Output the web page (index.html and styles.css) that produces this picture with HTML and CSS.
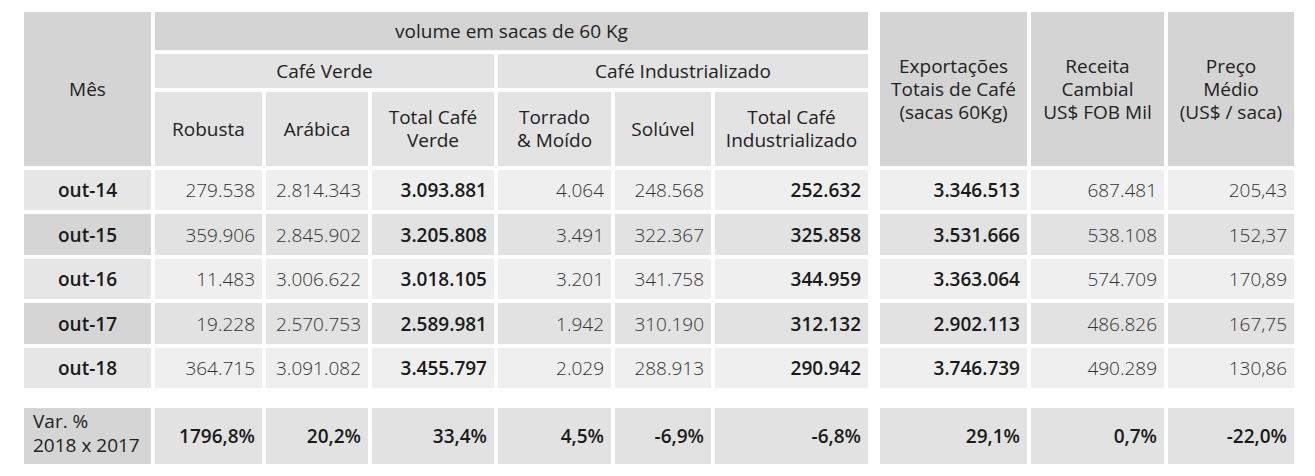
FILE: index.html
```html
<!DOCTYPE html>
<html lang="pt">
<head>
<meta charset="utf-8">
<link rel="stylesheet" href="styles.css">
</head>
<body>
<div class="sheet">
  <div class="h dark mes">Mês</div>
  <div class="h dark volume">volume em sacas de 60 Kg</div>
  <div class="h light verde">Café Verde</div>
  <div class="h light ind">Café Industrializado</div>
  <div class="h light sub s2">Robusta</div>
  <div class="h light sub s3">Arábica</div>
  <div class="h light sub s4">Total Café<br>Verde</div>
  <div class="h light sub s5">Torrado<br>&amp; Moído</div>
  <div class="h light sub s6">Solúvel</div>
  <div class="h light sub s7">Total Café<br>Industrializado</div>
  <div class="head-sep"></div>
  <div class="h dark exp">Exportações<br>Totais de Café<br>(sacas 60Kg)</div>
  <div class="h dark rec">Receita<br>Cambial<br>US$ FOB Mil</div>
  <div class="h dark pre">Preço<br>Médio<br>(US$ / saca)</div>

  <div class="c m odd first">out-14</div>
  <div class="c odd">279.538</div><div class="c odd">2.814.343</div><div class="c odd b">3.093.881</div>
  <div class="c odd">4.064</div><div class="c odd">248.568</div><div class="c odd b">252.632</div>
  <div class="sep"></div>
  <div class="c odd b">3.346.513</div><div class="c odd">687.481</div><div class="c odd">205,43</div>

  <div class="c m even">out-15</div>
  <div class="c even">359.906</div><div class="c even">2.845.902</div><div class="c even b">3.205.808</div>
  <div class="c even">3.491</div><div class="c even">322.367</div><div class="c even b">325.858</div>
  <div class="sep"></div>
  <div class="c even b">3.531.666</div><div class="c even">538.108</div><div class="c even">152,37</div>

  <div class="c m odd">out-16</div>
  <div class="c odd">11.483</div><div class="c odd">3.006.622</div><div class="c odd b">3.018.105</div>
  <div class="c odd">3.201</div><div class="c odd">341.758</div><div class="c odd b">344.959</div>
  <div class="sep"></div>
  <div class="c odd b">3.363.064</div><div class="c odd">574.709</div><div class="c odd">170,89</div>

  <div class="c m even">out-17</div>
  <div class="c even">19.228</div><div class="c even">2.570.753</div><div class="c even b">2.589.981</div>
  <div class="c even">1.942</div><div class="c even">310.190</div><div class="c even b">312.132</div>
  <div class="sep"></div>
  <div class="c even b">2.902.113</div><div class="c even">486.826</div><div class="c even">167,75</div>

  <div class="c m odd">out-18</div>
  <div class="c odd">364.715</div><div class="c odd">3.091.082</div><div class="c odd b">3.455.797</div>
  <div class="c odd">2.029</div><div class="c odd">288.913</div><div class="c odd b">290.942</div>
  <div class="sep"></div>
  <div class="c odd b">3.746.739</div><div class="c odd">490.289</div><div class="c odd">130,86</div>

  <div class="gap-row"></div>

  <div class="c var-label">Var. %<br>2018 x 2017</div>
  <div class="c even b">1796,8%</div><div class="c even b">20,2%</div><div class="c even b">33,4%</div>
  <div class="c even b">4,5%</div><div class="c even b">-6,9%</div><div class="c even b">-6,8%</div>
  <div class="sep"></div>
  <div class="c even b">29,1%</div><div class="c even b">0,7%</div><div class="c even b">-22,0%</div>
</div>
</body>
</html>
```

FILE: styles.css
```css
html, body {
  margin: 0;
  padding: 0;
  background: #ffffff;
}

body {
  font-family: "Open Sans", "Liberation Sans", sans-serif;
  color: #222222;
}

.sheet {
  display: grid;
  grid-template-columns: 127px 107px 102px 122px 113px 96px 153px 4px 147px 133px 126px;
  grid-template-rows: 38px 34px 74px 40px 41px 40px 41px 40px 12px 56px;
  column-gap: 4px;
  row-gap: 4px;
  padding: 12px 24px;
  width: max-content;
}

.h {
  display: flex;
  align-items: center;
  justify-content: center;
  text-align: center;
  font-size: 19px;
  line-height: 23px;
  color: #222222;
}

.dark { background: #d4d4d4; }
.light { background: #e3e3e3; }

.mes { grid-column: 1; grid-row: 1 / 4; }
.volume { grid-column: 2 / 8; grid-row: 1; }
.verde { grid-column: 2 / 5; grid-row: 2; }
.ind { grid-column: 5 / 8; grid-row: 2; }
.sub { grid-row: 3; }
.s2 { grid-column: 2; }
.s3 { grid-column: 3; }
.s4 { grid-column: 4; }
.s5 { grid-column: 5; }
.s6 { grid-column: 6; }
.s7 { grid-column: 7; }
.head-sep { grid-column: 8; grid-row: 1 / 4; }
.exp { grid-column: 9; grid-row: 1 / 4; }
.rec { grid-column: 10; grid-row: 1 / 4; }
.pre { grid-column: 11; grid-row: 1 / 4; }

.first { grid-row: 4; grid-column: 1; }

.c {
  display: flex;
  align-items: center;
  justify-content: flex-end;
  padding-right: 7px;
  font-size: 19px;
  font-weight: 300;
  color: #333333;
}

.c.b {
  font-weight: 600;
  color: #1a1a1a;
}

.odd { background: #efefef; }
.even { background: #e2e2e2; }

.c.m {
  justify-content: center;
  padding-right: 0;
  font-weight: 600;
  color: #1a1a1a;
}
.c.m.odd { background: #e6e6e6; }
.c.m.even { background: #d5d5d5; }

.gap-row { grid-column: 1 / -1; }

.c.var-label {
  justify-content: flex-start;
  padding: 0 0 6px 9px;
  background: #d5d5d5;
  font-weight: 400;
  color: #222222;
  line-height: 24px;
}
```
